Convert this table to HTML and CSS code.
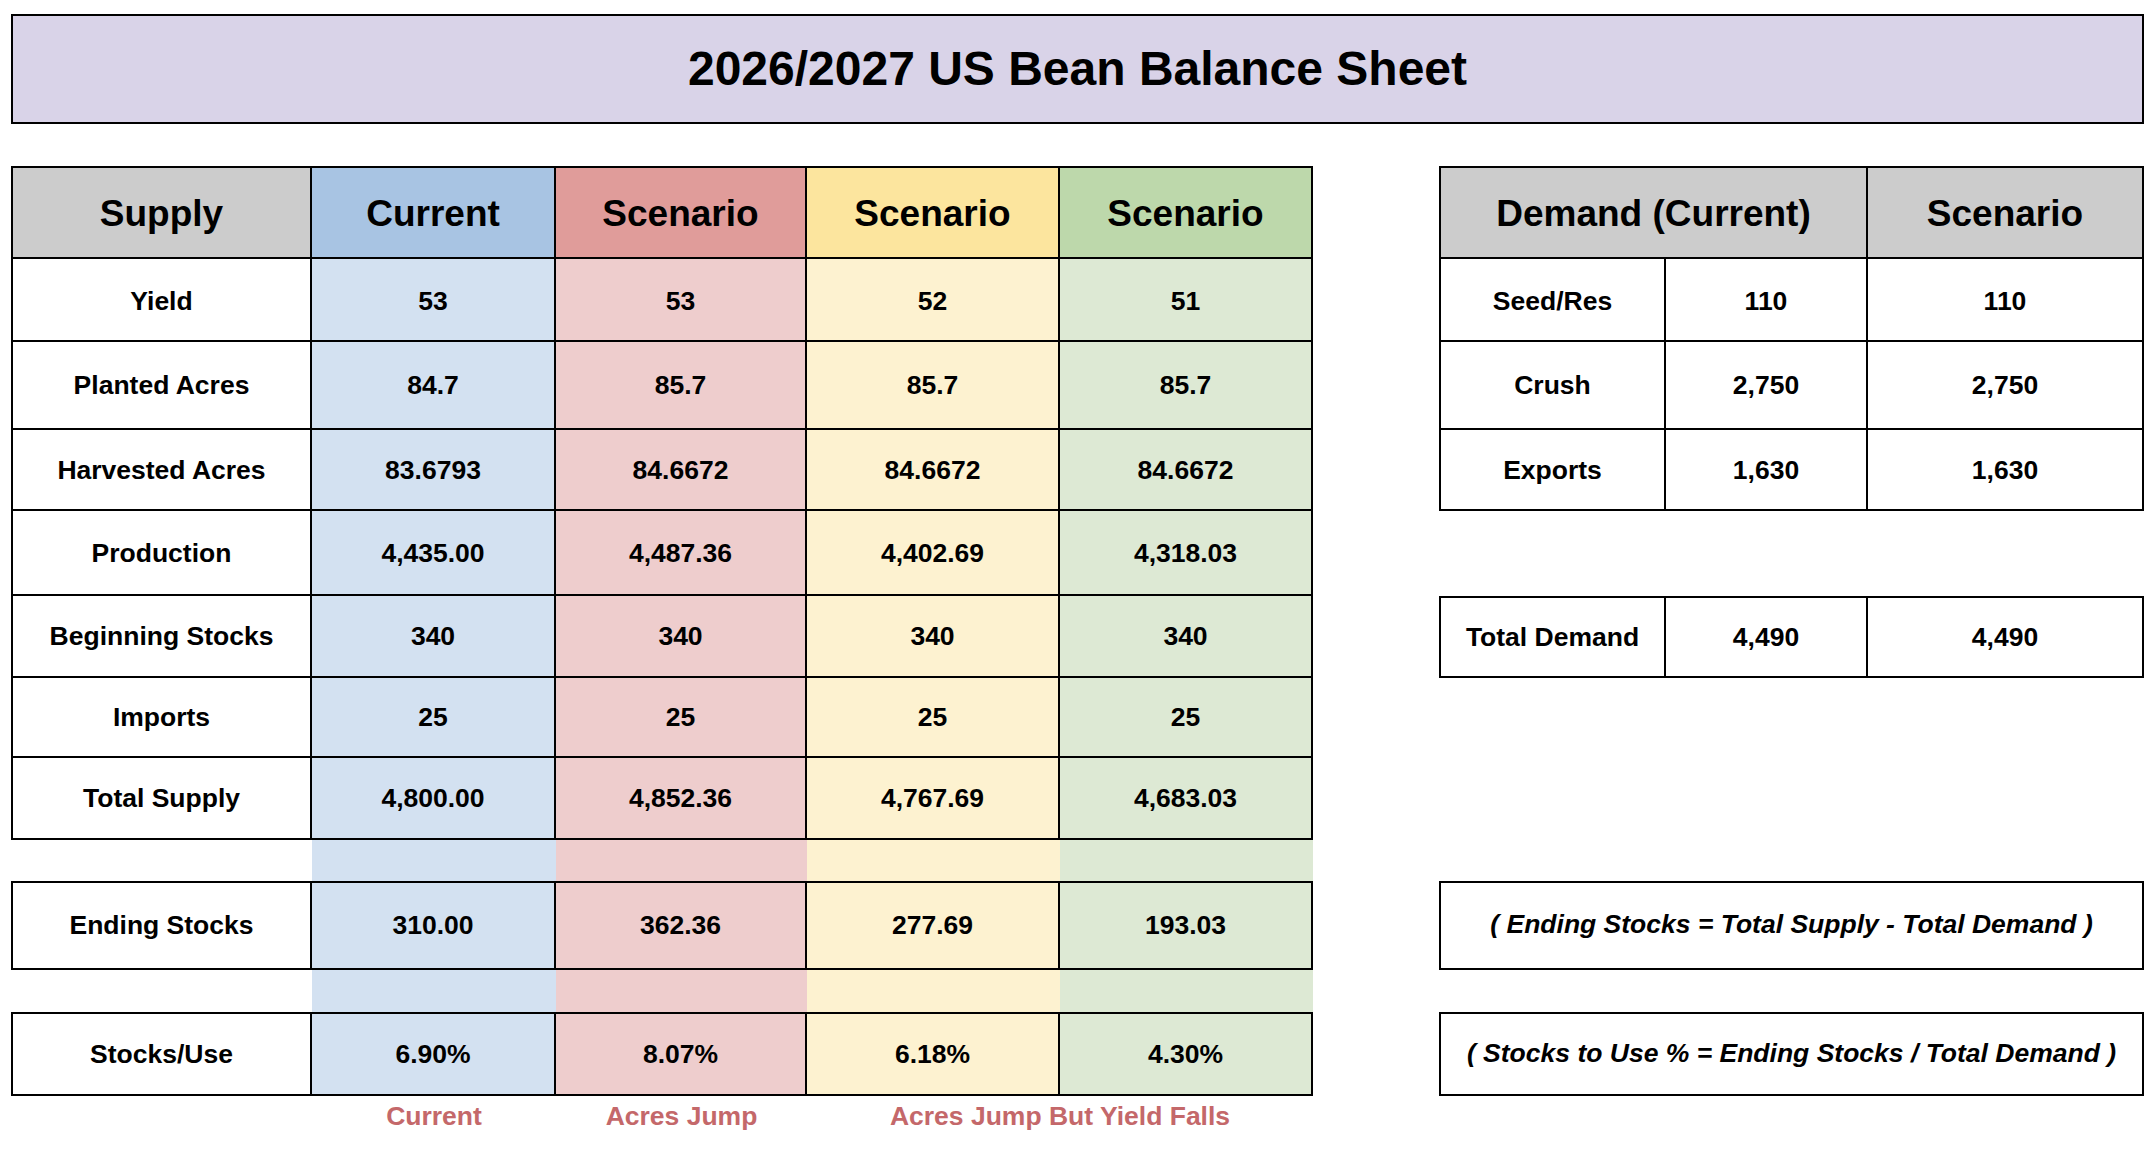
FILE: index.html
```html
<!DOCTYPE html>
<html lang="en">
<head>
<meta charset="utf-8">
<title>2026/2027 US Bean Balance Sheet</title>
<link rel="stylesheet" href="styles.css">
</head>
<body>
<header class="title">2026/2027 US Bean Balance Sheet</header>
<main class="sheet">
  <section class="supply">
    <div class="c hd first top gray">Supply</div>
    <div class="c hd top blue-h">Current</div>
    <div class="c hd top red-h">Scenario</div>
    <div class="c hd top yellow-h">Scenario</div>
    <div class="c hd top green-h">Scenario</div>

    <div class="c first lo">Yield</div>
    <div class="c blue lo">53</div>
    <div class="c red lo">53</div>
    <div class="c yellow lo">52</div>
    <div class="c green lo">51</div>

    <div class="c first">Planted Acres</div>
    <div class="c blue">84.7</div>
    <div class="c red">85.7</div>
    <div class="c yellow">85.7</div>
    <div class="c green">85.7</div>

    <div class="c first">Harvested Acres</div>
    <div class="c blue">83.6793</div>
    <div class="c red">84.6672</div>
    <div class="c yellow">84.6672</div>
    <div class="c green">84.6672</div>

    <div class="c first">Production</div>
    <div class="c blue">4,435.00</div>
    <div class="c red">4,487.36</div>
    <div class="c yellow">4,402.69</div>
    <div class="c green">4,318.03</div>

    <div class="c first">Beginning Stocks</div>
    <div class="c blue">340</div>
    <div class="c red">340</div>
    <div class="c yellow">340</div>
    <div class="c green">340</div>

    <div class="c first">Imports</div>
    <div class="c blue">25</div>
    <div class="c red">25</div>
    <div class="c yellow">25</div>
    <div class="c green">25</div>

    <div class="c first">Total Supply</div>
    <div class="c blue">4,800.00</div>
    <div class="c red">4,852.36</div>
    <div class="c yellow">4,767.69</div>
    <div class="c green">4,683.03</div>

    <div class="sp"></div>
    <div class="sp blue"></div>
    <div class="sp red"></div>
    <div class="sp yellow"></div>
    <div class="sp green"></div>

    <div class="c first top">Ending Stocks</div>
    <div class="c top blue">310.00</div>
    <div class="c top red">362.36</div>
    <div class="c top yellow">277.69</div>
    <div class="c top green">193.03</div>

    <div class="sp"></div>
    <div class="sp blue"></div>
    <div class="sp red"></div>
    <div class="sp yellow"></div>
    <div class="sp green"></div>

    <div class="c first top">Stocks/Use</div>
    <div class="c top blue">6.90%</div>
    <div class="c top red">8.07%</div>
    <div class="c top yellow">6.18%</div>
    <div class="c top green">4.30%</div>

    <div class="lbl"></div>
    <div class="lbl">Current</div>
    <div class="lbl">Acres Jump</div>
    <div class="lbl wide">Acres Jump But Yield Falls</div>
  </section>

  <section class="demand-col">
    <div class="demand">
      <div class="c hd first top gray span2">Demand (Current)</div>
      <div class="c hd top gray">Scenario</div>

      <div class="c first lo">Seed/Res</div>
      <div class="c lo">110</div>
      <div class="c lo">110</div>

      <div class="c first">Crush</div>
      <div class="c">2,750</div>
      <div class="c">2,750</div>

      <div class="c first">Exports</div>
      <div class="c">1,630</div>
      <div class="c">1,630</div>
    </div>

    <div class="demand total">
      <div class="c first top">Total Demand</div>
      <div class="c top">4,490</div>
      <div class="c top">4,490</div>
    </div>

    <div class="formula f1">( Ending Stocks = Total Supply - Total Demand )</div>
    <div class="formula f2">( Stocks to Use % = Ending Stocks / Total Demand )</div>
  </section>
</main>
</body>
</html>
```

FILE: styles.css
```css
* { box-sizing: border-box; }

html, body {
  margin: 0;
  padding: 0;
  background: #ffffff;
}

body {
  font-family: "Liberation Sans", Arial, sans-serif;
  font-weight: bold;
  color: #000000;
}

.title {
  margin: 14px 0 0 11px;
  width: 2133px;
  height: 110px;
  border: 2px solid #000;
  background: #d9d3e8;
  font-size: 48px;
  display: flex;
  align-items: center;
  justify-content: center;
  padding-bottom: 2px;
}

.sheet {
  display: flex;
  margin: 42px 0 0 11px;
  gap: 126px;
}

.supply {
  display: grid;
  grid-template-columns: 301px 244px 251px 253px 253px;
  grid-template-rows: 93px 83px 88px 81px 85px 82px 80px 82px 41px 89px 42px 84px 40px;
}

.c {
  display: flex;
  align-items: center;
  justify-content: center;
  font-size: 26.5px;
  border-right: 2px solid #000;
  border-bottom: 2px solid #000;
  background: #ffffff;
  white-space: nowrap;
  padding-top: 1px;
}

.c.lo { padding-top: 4px; }
.c.first { border-left: 2px solid #000; }
.c.top { border-top: 2px solid #000; padding-top: 0; }

.c.hd {
  font-size: 37px;
  padding-top: 3px;
}

.gray { background: #cccccc; }
.blue-h { background: #a8c4e3; }
.red-h { background: #e09c9a; }
.yellow-h { background: #fce59e; }
.green-h { background: #bdd8ab; }

.c.blue, .sp.blue { background: #d3e1f1; }
.c.red, .sp.red { background: #eecdcd; }
.c.yellow, .sp.yellow { background: #fdf2d0; }
.c.green, .sp.green { background: #dde9d4; }

.lbl {
  display: flex;
  align-items: center;
  justify-content: center;
  font-size: 26.5px;
  color: #c4686a;
  white-space: nowrap;
}

.lbl.wide { grid-column: span 2; }

.demand-col {
  display: flex;
  flex-direction: column;
}

.demand {
  display: grid;
  grid-template-columns: 227px 202px 276px;
  grid-template-rows: 93px 83px 88px 81px;
}

.demand .span2 { grid-column: span 2; }

.demand.total {
  grid-template-rows: 82px;
  margin-top: 85px;
}

.formula {
  display: flex;
  align-items: center;
  justify-content: center;
  border: 2px solid #000;
  font-size: 26.5px;
  font-style: italic;
  white-space: nowrap;
}

.formula.f1 {
  margin-top: 203px;
  height: 89px;
  padding-bottom: 2px;
}

.formula.f2 {
  margin-top: 42px;
  height: 84px;
  padding-bottom: 2px;
}
```
